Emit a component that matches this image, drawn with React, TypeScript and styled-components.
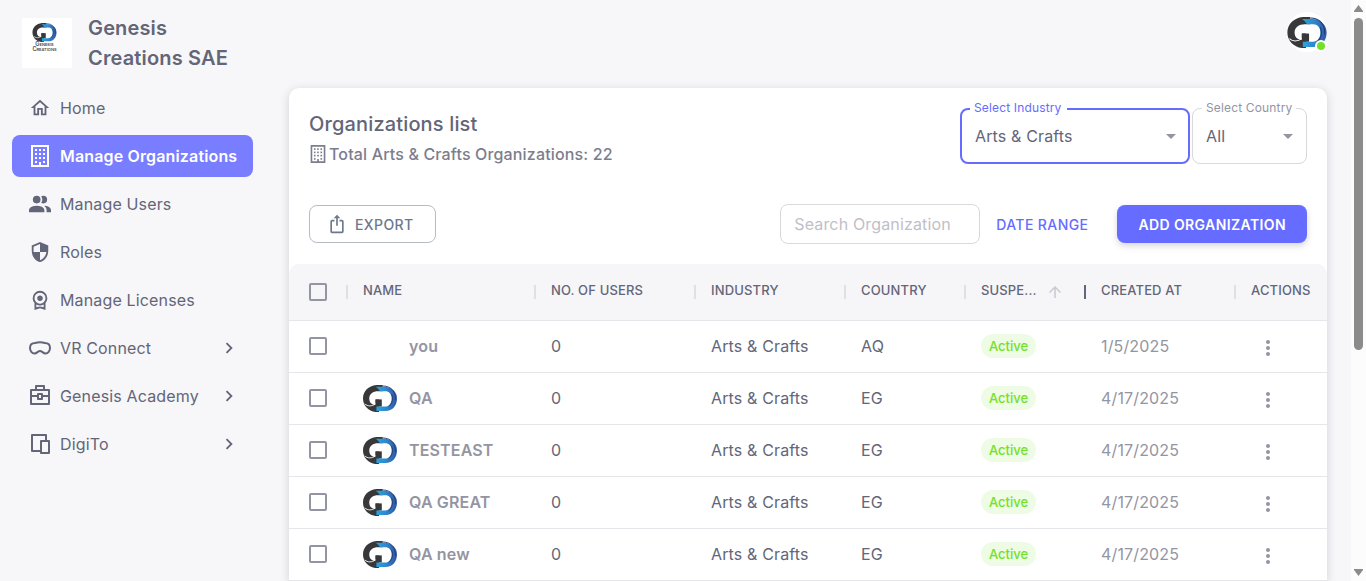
import React from "react";
import styled, { createGlobalStyle, css } from "styled-components";
import { MdArrowUpward, MdMoreVert, MdSecurity } from "react-icons/md";

const color = {
  page: "#f7f7f9",
  text: "#636578",
  muted: "#9495a2",
  line: "#e6e6ea",
  primary: "#666cff",
  primaryLight: "#787eff",
  secondary: "#6d788d",
  success: "#72e128",
};

const GlobalStyle = createGlobalStyle`
  *, *::before, *::after { box-sizing: border-box; }
  body {
    margin: 0;
    background: ${color.page};
    color: ${color.text};
    font-family: Inter, "Liberation Sans", sans-serif;
    font-size: 16px;
    letter-spacing: 0.15px;
  }
  button, input, select { font: inherit; letter-spacing: inherit; color: inherit; }
  h1, h2, p, ul { margin: 0; padding: 0; }
`;

const Shell = styled.div`
  display: flex;
  height: 100vh;
  overflow: hidden;
`;

const Sidebar = styled.aside`
  flex: 0 0 265px;
  padding: 13px 12px;
`;

const Brand = styled.a`
  display: flex;
  align-items: center;
  gap: 16px;
  padding: 0 10px;
  color: inherit;
  text-decoration: none;
`;

const BrandLogo = styled.svg`
  flex: 0 0 50px;
  height: 50px;
  background: #fff;
`;

const BrandName = styled.span`
  font-size: 20px;
  font-weight: 600;
  line-height: 30px;
`;

const NavList = styled.ul`
  display: flex;
  flex-direction: column;
  gap: 6px;
  margin-top: 14px;
  list-style: none;
`;

const NavLink = styled.a<{ $active?: boolean }>`
  display: flex;
  align-items: center;
  gap: 9px;
  height: 42px;
  padding: 0 13px 0 17px;
  border-radius: 8px;
  color: inherit;
  text-decoration: none;
  white-space: nowrap;
  ${(p) =>
    p.$active &&
    css`
      background: ${color.primaryLight};
      color: #fff;
      font-weight: 600;
    `}
`;

const NavText = styled.span`
  flex: 1;
`;

const Content = styled.div`
  flex: 1;
  min-width: 0;
  display: flex;
  flex-direction: column;
  padding: 0 24px;
`;

const TopBar = styled.header`
  display: flex;
  align-items: center;
  justify-content: flex-end;
  flex: 0 0 64px;
`;

const AccountButton = styled.button`
  position: relative;
  display: grid;
  place-items: center;
  width: 40px;
  height: 40px;
  padding: 0;
  border: 0;
  border-radius: 50%;
  background: #fff;
`;

const OnlineBadge = styled.span`
  position: absolute;
  right: 0;
  bottom: 0;
  width: 12px;
  height: 12px;
  border: 2px solid #fff;
  border-radius: 50%;
  background: ${color.success};
`;

const Card = styled.main`
  flex: 1 0 auto;
  margin-top: 24px;
  border-radius: 10px 10px 0 0;
  background: #fff;
  box-shadow: 0 2px 10px rgba(76, 78, 100, 0.22);
`;

const CardHead = styled.div`
  display: flex;
  justify-content: space-between;
  padding: 20px 20px 0;
`;

const Title = styled.h1`
  font-size: 20px;
  font-weight: 500;
  line-height: 32px;
`;

const Total = styled.p`
  display: flex;
  align-items: center;
  gap: 2px;
  line-height: 28px;
  font-weight: 500;
  color: #7c7d8d;
`;

const Filters = styled.div`
  display: flex;
  align-items: flex-start;
  gap: 2px;
`;

const Field = styled.div<{ $width: number }>`
  position: relative;
  display: grid;
  width: ${(p) => p.$width}px;
`;

const FieldLabel = styled.label<{ $focused?: boolean }>`
  position: absolute;
  top: -8px;
  left: 10px;
  padding: 0 ${(p) => (p.$focused ? 6 : 4)}px 0 4px;
  background: #fff;
  color: ${(p) => (p.$focused ? color.primary : color.muted)};
  font-size: 12px;
  line-height: 16px;
  white-space: nowrap;
`;

const Select = styled.select<{ $focused?: boolean }>`
  grid-area: 1 / 1;
  height: 56px;
  padding: 0 32px 0 13px;
  border: ${(p) => (p.$focused ? `2px solid ${color.primary}` : "1px solid #d8d8dd")};
  border-radius: 8px;
  background: transparent;
  appearance: none;
  outline: none;
`;

const Caret = styled.svg`
  grid-area: 1 / 1;
  place-self: center end;
  margin-right: 7px;
  color: ${color.muted};
  pointer-events: none;
`;

const Toolbar = styled.div`
  display: flex;
  align-items: center;
  justify-content: space-between;
  padding: 36px 20px 20px;
`;

const ToolbarGroup = styled.div`
  display: flex;
  align-items: center;
`;

const Button = styled.button<{ $kind: "outlined" | "text" | "contained" }>`
  display: inline-flex;
  align-items: center;
  justify-content: center;
  gap: 8px;
  height: 38px;
  padding: 0 21px;
  border: 0;
  border-radius: 8px;
  background: transparent;
  font-size: 14px;
  font-weight: 500;
  letter-spacing: 0.4px;
  white-space: nowrap;
  ${(p) =>
    p.$kind === "outlined" &&
    css`
      padding: 0 21px 0 17px;
      border: 1px solid #b6bbc6;
      color: ${color.secondary};
    `}
  ${(p) =>
    p.$kind === "text" &&
    css`
      padding: 0 16px;
      color: ${color.primary};
    `}
  ${(p) =>
    p.$kind === "contained" &&
    css`
      margin-left: 13px;
      background: ${color.primary};
      color: #fff;
      font-weight: 600;
      box-shadow: 0 3px 6px rgba(76, 78, 100, 0.22);
    `}
`;

const Search = styled.input`
  width: 200px;
  height: 40px;
  padding: 0 13px;
  border: 1px solid #d8d8dd;
  border-radius: 8px;
  background: #fff;
  outline: none;
  &::placeholder {
    color: #bfc0c8;
    opacity: 1;
  }
`;

const Table = styled.table`
  width: 100%;
  table-layout: fixed;
  border-spacing: 0;
`;

const Col = styled.col<{ $width?: number }>`
  width: ${(p) => (p.$width ? `${p.$width}px` : "auto")};
`;

const HeadCell = styled.th`
  height: 57px;
  padding: 0;
  border-bottom: 1px solid ${color.line};
  background: #f6f6f8;
  font-size: 13px;
  font-weight: 500;
  text-align: left;
  white-space: nowrap;
  &:first-child {
    padding-left: 20px;
    border-top-left-radius: 10px;
  }
  &:last-child {
    border-top-right-radius: 10px;
  }
`;

const HeadInner = styled.div`
  display: flex;
  align-items: center;
`;

const Separator = styled.span<{ $strong?: boolean }>`
  width: 2px;
  height: 14px;
  margin: 0 15px 0 -1px;
  background: ${(p) => (p.$strong ? color.text : "#e0e0e4")};
`;

const HeadText = styled.span`
  padding-bottom: 4px;
  line-height: 16px;
`;

const SortArrow = styled(MdArrowUpward)`
  margin-left: 9px;
  color: #c8c9d0;
`;

const Cell = styled.td<{ $muted?: boolean }>`
  height: 52px;
  padding: 0 0 1px 16px;
  border-bottom: 1px solid ${color.line};
  color: ${(p) => (p.$muted ? color.muted : color.text)};
  white-space: nowrap;
  &:first-child {
    padding-left: 20px;
  }
`;

const Checkbox = styled.input`
  display: block;
  width: 18px;
  height: 18px;
  margin: 0;
  border: 2px solid ${color.muted};
  border-radius: 2px;
  background: transparent;
  appearance: none;
`;

const OrgLink = styled.a`
  display: flex;
  align-items: center;
  gap: 12px;
  color: ${color.muted};
  font-weight: 600;
  text-decoration: none;
`;

const AvatarSlot = styled.span`
  display: grid;
  place-items: center;
  width: 34px;
  height: 34px;
`;

const Chip = styled.span`
  display: inline-flex;
  align-items: center;
  height: 24px;
  padding: 0 8px;
  border-radius: 12px;
  background: #eefbe5;
  color: ${color.success};
  font-size: 13px;
  font-weight: 500;
  letter-spacing: 0;
`;

const RowMenu = styled.button`
  display: grid;
  place-items: center;
  width: 34px;
  padding: 4px 0 0;
  border: 0;
  background: transparent;
  color: ${color.muted};
`;

const ScrollRail = styled.div`
  flex: 0 0 15px;
  display: flex;
  flex-direction: column;
  align-items: center;
  padding: 4px 0;
  background: #fcfcfc;
  color: #8b8b8b;
`;

const ScrollLane = styled.div`
  flex: 1;
  width: 9px;
  margin: 6px 0;
`;

const ScrollThumb = styled.div`
  height: 61%;
  border-radius: 5px;
  background: currentColor;
`;

const LogoShapes = () => (
  <>
    <defs>
      <linearGradient id="logo-blue" x1="0" y1="0" x2="1" y2="0">
        <stop offset="0.1" stopColor="#2ba0dd" />
        <stop offset="0.5" stopColor="#2f86cc" />
        <stop offset="1" stopColor="#2f56a6" />
      </linearGradient>
    </defs>
    <path d="M22 0H15C6 1 0 7 0 15C0 23 6 29 14 30H18V16H14V22C10 22 7 20 7 15C7 10 11 7 17 7H22Z" fill="#38383b" />
    <path d="M14 16H21V24H14Z" fill="#38383b" />
    <path d="M14 2H25C33 3 38 8 38 15C38 23 33 29 25 29H15V24H25C29 24 32 20 32 15C32 10 29 7 25 7H19C18 5 16 3 14 2Z" fill="url(#logo-blue)" />
    <path d="M22 1C32 1 37 8 36 17M32 10C34 15 33 20 29 24" fill="none" stroke="#243c70" strokeWidth="1" />
    <path d="M2 21C5 24 10 24 14 21" fill="none" stroke="#fff" strokeWidth="1" />
  </>
);

const Logo = ({ width }: { width: number }) => (
  <svg width={width} height={Math.round(width * 0.78)} viewBox="0 0 38 30" aria-hidden="true">
    <LogoShapes />
  </svg>
);

const PathIcon = ({ d, size = 22, viewBox = "0 0 24 24" }: { d: string; size?: number; viewBox?: string }) => (
  <svg width={size} height={size} viewBox={viewBox} fill="currentColor" aria-hidden="true">
    <path d={d} />
  </svg>
);

const BuildingIcon = ({ size = 22 }: { size?: number }) => (
  <svg width={size} height={size} viewBox="0 0 22 22" fill="currentColor" aria-hidden="true">
    <path fillRule="evenodd" d="M2 0H20V22H2ZM4 2V20H10V17H12V20H18V2Z" />
    {[4, 8, 12, 16].map((y) =>
      [6, 10, 14].map((x) => (y === 16 && x === 10 ? null : <rect key={`${x}-${y}`} x={x} y={y} width="2" height="2" />)),
    )}
  </svg>
);

const StrokeIcon = ({ children }: { children: React.ReactNode }) => (
  <svg width="22" height="22" viewBox="0 0 22 22" fill="none" stroke="currentColor" strokeWidth="2" aria-hidden="true">
    {children}
  </svg>
);

const GogglesIcon = () => (
  <StrokeIcon>
    <path d="M6 6C9 5 13 5 16 6C19 6 21 8 21 11C21 14 19 16.500 16.500 16.500C14 16.500 13 14 11 14C9 14 8 16.500 5.500 16.500C3 16.500 1 14 1 11C1 8 3 6 6 6Z" />
  </StrokeIcon>
);

const CaseIcon = () => (
  <StrokeIcon>
    <path d="M2 5H20V19H2ZM7 5V1H15V5M2 11H9M13 11H20M9 9H13V14H9Z" strokeLinejoin="round" />
  </StrokeIcon>
);

const DevicesIcon = () => (
  <StrokeIcon>
    <path d="M11 18H3V2H17V8M12 8H20V20H12Z" strokeLinejoin="round" />
  </StrokeIcon>
);

const icons = {
  home: "M12 5.690L17 10.190V18H15V12H9V18H7V10.190L12 5.690M12 3L2 12H5V20H11V14H13V20H19V12H22L12 3Z",
  people:
    "M16 17V19H2V17S2 13 9 13 16 17 16 17M12.500 7.500A3.500 3.500 0 1 0 9 11A3.500 3.500 0 0 0 12.500 7.500M15.940 13A5.320 5.320 0 0 1 18 17V19H22V17S22 13.370 15.940 13M15 4A3.390 3.390 0 0 0 13.070 4.590A5 5 0 0 1 13.070 10.410A3.390 3.390 0 0 0 15 11A3.500 3.500 0 0 0 15 4Z",
  license:
    "M9 10A3.040 3.040 0 0 1 12 7A3.040 3.040 0 0 1 15 10A3.040 3.040 0 0 1 12 13A3.040 3.040 0 0 1 9 10M12 19L16 20V16.920A7.540 7.540 0 0 1 12 18A7.540 7.540 0 0 1 8 16.920V20M12 4A5.780 5.780 0 0 0 7.760 5.740A5.780 5.780 0 0 0 6 10A5.780 5.780 0 0 0 7.760 14.230A5.780 5.780 0 0 0 12 16A5.780 5.780 0 0 0 16.240 14.230A5.780 5.780 0 0 0 18 10A5.780 5.780 0 0 0 16.240 5.740A5.780 5.780 0 0 0 12 4M20 10A8.040 8.040 0 0 1 19.430 12.800A7.840 7.840 0 0 1 18 15.280V23L12 21L6 23V15.280A7.900 7.900 0 0 1 4 10A7.680 7.680 0 0 1 6.330 4.360A7.730 7.730 0 0 1 12 2A7.730 7.730 0 0 1 17.670 4.360A7.680 7.680 0 0 1 20 10Z",
  chevron: "M8.590 16.580L13.170 12L8.590 7.410L10 6L16 12L10 18L8.590 16.580Z",
  export:
    "M12 1L8 5H11V14H13V5H16M18 23H6C4.890 23 4 22.100 4 21V9A2 2 0 0 1 6 7H9V9H6V21H18V9H15V7H18A2 2 0 0 1 20 9V21A2 2 0 0 1 18 23Z",
  caret: "M7 10L12 15L17 10Z",
};

const navItems = [
  { label: "Home", icon: <PathIcon d={icons.home} /> },
  { label: "Manage Organizations", icon: <BuildingIcon />, active: true },
  { label: "Manage Users", icon: <PathIcon d={icons.people} viewBox="2 1.500 20 20" /> },
  { label: "Roles", icon: <MdSecurity size={22} /> },
  { label: "Manage Licenses", icon: <PathIcon d={icons.license} /> },
  { label: "VR Connect", icon: <GogglesIcon />, group: true },
  { label: "Genesis Academy", icon: <CaseIcon />, group: true },
  { label: "DigiTo", icon: <DevicesIcon />, group: true },
];

const columns = [
  { label: "NAME" },
  { label: "NO. OF USERS", width: 160 },
  { label: "INDUSTRY", width: 150 },
  { label: "COUNTRY", width: 120 },
  { label: "SUSPE...", width: 120, sorted: true },
  { label: "CREATED AT", width: 150, strong: true },
  { label: "ACTIONS", width: 92 },
];

const organizations = [
  { name: "you", country: "AQ", created: "1/5/2025", logo: false },
  { name: "QA", country: "EG", created: "4/17/2025", logo: true },
  { name: "TESTEAST", country: "EG", created: "4/17/2025", logo: true },
  { name: "QA GREAT", country: "EG", created: "4/17/2025", logo: true },
  { name: "QA new", country: "EG", created: "4/17/2025", logo: true },
];

type SelectFieldProps = { id: string; label: string; value: string; width: number; focused?: boolean };

const SelectField = ({ id, label, value, width, focused }: SelectFieldProps) => (
  <Field $width={width}>
    <Select id={id} defaultValue={value} $focused={focused}>
      <option>{value}</option>
    </Select>
    <Caret width="24" height="24" viewBox="0 0 24 24" fill="currentColor" aria-hidden="true">
      <path d={icons.caret} />
    </Caret>
    <FieldLabel htmlFor={id} $focused={focused}>
      {label}
    </FieldLabel>
  </Field>
);

export default function App() {
  return (
    <>
      <GlobalStyle />
      <Shell>
        <Sidebar>
          <Brand href="#">
            <BrandLogo viewBox="0 0 100 100" aria-hidden="true">
              <svg x="20" y="10" width="50" height="38" viewBox="0 0 38 30">
                <LogoShapes />
              </svg>
              <g fontSize="8" fontWeight="600" textAnchor="middle" fill="#4a4a4e" letterSpacing="0">
                <text x="45" y="56">
                  <tspan fontSize="11">G</tspan>ENESIS
                </text>
                <text x="45" y="65">
                  <tspan fontSize="11">C</tspan>REATIONS
                </text>
              </g>
            </BrandLogo>
            <BrandName>Genesis Creations SAE</BrandName>
          </Brand>
          <nav>
            <NavList>
              {navItems.map((item) => (
                <li key={item.label}>
                  <NavLink href="#" $active={item.active}>
                    {item.icon}
                    <NavText>{item.label}</NavText>
                    {item.group && <PathIcon d={icons.chevron} />}
                  </NavLink>
                </li>
              ))}
            </NavList>
          </nav>
        </Sidebar>

        <Content>
          <TopBar>
            <AccountButton type="button" aria-label="Account">
              <Logo width={40} />
              <OnlineBadge />
            </AccountButton>
          </TopBar>

          <Card>
            <CardHead>
              <div>
                <Title>Organizations list</Title>
                <Total>
                  <BuildingIcon size={18} />
                  Total Arts &amp; Crafts Organizations: 22
                </Total>
              </div>
              <Filters>
                <SelectField id="industry" label="Select Industry" value="Arts & Crafts" width={230} focused />
                <SelectField id="country" label="Select Country" value="All" width={115} />
              </Filters>
            </CardHead>

            <Toolbar>
              <Button type="button" $kind="outlined">
                <PathIcon d={icons.export} size={20} />
                EXPORT
              </Button>
              <ToolbarGroup>
                <Search type="text" placeholder="Search Organization" aria-label="Search Organization" />
                <Button type="button" $kind="text">
                  DATE RANGE
                </Button>
                <Button type="button" $kind="contained">
                  ADD ORGANIZATION
                </Button>
              </ToolbarGroup>
            </Toolbar>

            <Table>
              <colgroup>
                <Col $width={58} />
                {columns.map((c) => (
                  <Col key={c.label} $width={c.width} />
                ))}
              </colgroup>
              <thead>
                <tr>
                  <HeadCell>
                    <Checkbox type="checkbox" aria-label="Select all rows" />
                  </HeadCell>
                  {columns.map((c) => (
                    <HeadCell key={c.label} scope="col">
                      <HeadInner>
                        <Separator $strong={c.strong} />
                        <HeadText>{c.label}</HeadText>
                        {c.sorted && <SortArrow size={18} />}
                      </HeadInner>
                    </HeadCell>
                  ))}
                </tr>
              </thead>
              <tbody>
                {organizations.map((org) => (
                  <tr key={org.name}>
                    <Cell>
                      <Checkbox type="checkbox" aria-label={`Select ${org.name}`} />
                    </Cell>
                    <Cell>
                      <OrgLink href="#">
                        <AvatarSlot>{org.logo && <Logo width={34} />}</AvatarSlot>
                        {org.name}
                      </OrgLink>
                    </Cell>
                    <Cell>0</Cell>
                    <Cell>Arts &amp; Crafts</Cell>
                    <Cell>{org.country}</Cell>
                    <Cell>
                      <Chip>Active</Chip>
                    </Cell>
                    <Cell $muted>{org.created}</Cell>
                    <Cell>
                      <RowMenu type="button" aria-label={`Actions for ${org.name}`}>
                        <MdMoreVert size={24} />
                      </RowMenu>
                    </Cell>
                  </tr>
                ))}
              </tbody>
            </Table>
          </Card>
        </Content>

        <ScrollRail aria-hidden="true">
          <svg width="9" height="8" viewBox="0 0 9 8" fill="currentColor">
            <path d="M4.500 1L9 7V8H0V7Z" />
          </svg>
          <ScrollLane>
            <ScrollThumb />
          </ScrollLane>
          <svg width="9" height="8" viewBox="0 0 9 8" fill="currentColor">
            <path d="M4.500 7L9 1V0H0V1Z" />
          </svg>
        </ScrollRail>
      </Shell>
    </>
  );
}
